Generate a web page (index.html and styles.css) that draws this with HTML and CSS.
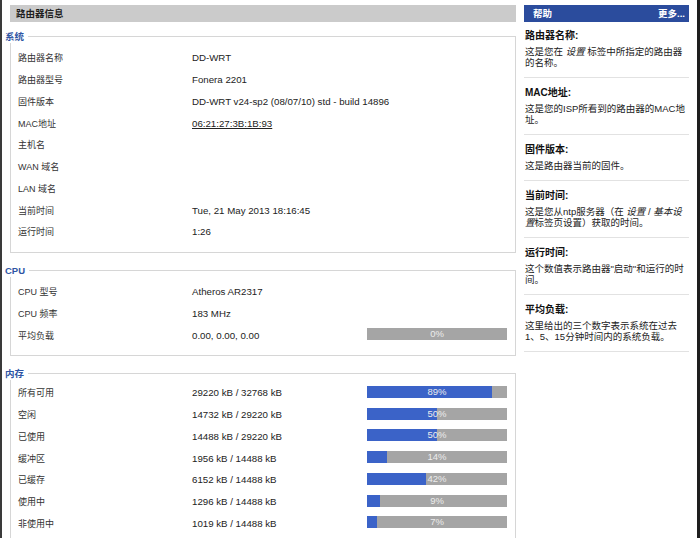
FILE: index.html
```html
<!DOCTYPE html>
<html lang="zh-CN">
<head>
<meta charset="utf-8">
<title>路由器信息</title>
<link rel="stylesheet" href="styles.css">
</head>
<body>
<div class="page">
  <div class="main">
    <div class="hdr">路由器信息</div>

    <div class="fs">
      <div class="legend">系统</div>
      <div class="row"><span class="lbl">路由器名称</span><span class="val">DD-WRT</span></div>
      <div class="row"><span class="lbl">路由器型号</span><span class="val">Fonera 2201</span></div>
      <div class="row"><span class="lbl">固件版本</span><span class="val wide">DD-WRT v24-sp2 (08/07/10) std - build 14896</span></div>
      <div class="row"><span class="lbl">MAC地址</span><span class="val"><u>06:21:27:3B:1B:93</u></span></div>
      <div class="row"><span class="lbl">主机名</span><span class="val"></span></div>
      <div class="row"><span class="lbl">WAN 域名</span><span class="val"></span></div>
      <div class="row"><span class="lbl">LAN 域名</span><span class="val"></span></div>
      <div class="row"><span class="lbl">当前时间</span><span class="val">Tue, 21 May 2013 18:16:45</span></div>
      <div class="row"><span class="lbl">运行时间</span><span class="val">1:26</span></div>
    </div>

    <div class="fs fs-gap">
      <div class="legend">CPU</div>
      <div class="row"><span class="lbl">CPU 型号</span><span class="val">Atheros AR2317</span></div>
      <div class="row"><span class="lbl">CPU 频率</span><span class="val">183 MHz</span></div>
      <div class="row"><span class="lbl">平均负载</span><span class="val">0.00, 0.00, 0.00</span>
        <span class="bar"><span class="fill" style="width:0%"></span><span class="pct">0%</span></span></div>
    </div>

    <div class="fs fs-gap fs-tight">
      <div class="legend">内存</div>
      <div class="row"><span class="lbl">所有可用</span><span class="val">29220 kB / 32768 kB</span>
        <span class="bar"><span class="fill" style="width:89%"></span><span class="pct">89%</span></span></div>
      <div class="row"><span class="lbl">空闲</span><span class="val">14732 kB / 29220 kB</span>
        <span class="bar"><span class="fill" style="width:50%"></span><span class="pct">50%</span></span></div>
      <div class="row"><span class="lbl">已使用</span><span class="val">14488 kB / 29220 kB</span>
        <span class="bar"><span class="fill" style="width:50%"></span><span class="pct">50%</span></span></div>
      <div class="row"><span class="lbl">缓冲区</span><span class="val">1956 kB / 14488 kB</span>
        <span class="bar"><span class="fill" style="width:14%"></span><span class="pct">14%</span></span></div>
      <div class="row"><span class="lbl">已缓存</span><span class="val">6152 kB / 14488 kB</span>
        <span class="bar"><span class="fill" style="width:42%"></span><span class="pct">42%</span></span></div>
      <div class="row"><span class="lbl">使用中</span><span class="val">1296 kB / 14488 kB</span>
        <span class="bar"><span class="fill" style="width:9%"></span><span class="pct">9%</span></span></div>
      <div class="row"><span class="lbl">非使用中</span><span class="val">1019 kB / 14488 kB</span>
        <span class="bar"><span class="fill" style="width:7%"></span><span class="pct">7%</span></span></div>
    </div>
  </div>

  <div class="side">
    <div class="side-hdr"><span>帮助</span><span>更多...</span></div>
    <div class="help first">
      <div class="ht">路由器名称:</div>
      <div class="hb">这是您在 <em>设置</em> 标签中所指定的路由器的名称。</div>
    </div>
    <div class="help">
      <div class="ht">MAC地址:</div>
      <div class="hb">这是您的ISP所看到的路由器的MAC地址。</div>
    </div>
    <div class="help">
      <div class="ht">固件版本:</div>
      <div class="hb">这是路由器当前的固件。</div>
    </div>
    <div class="help">
      <div class="ht">当前时间:</div>
      <div class="hb">这是您从ntp服务器（在 <em>设置</em> / <em>基本设置</em>标签页设置）获取的时间。</div>
    </div>
    <div class="help">
      <div class="ht">运行时间:</div>
      <div class="hb">这个数值表示路由器"启动"和运行的时间。</div>
    </div>
    <div class="help">
      <div class="ht">平均负载:</div>
      <div class="hb">这里给出的三个数字表示系统在过去1、5、15分钟时间内的系统负载。</div>
    </div>
  </div>
</div>
</body>
</html>
```

FILE: styles.css
```css
html, body {
  margin: 0;
  padding: 0;
  background: #fff;
}

body {
  font-family: "Liberation Sans", "Noto Sans CJK SC", sans-serif;
  font-size: 10px;
  color: #222;
}

.page {
  display: grid;
  grid-template-columns: 506px 165px;
  column-gap: 8px;
  align-items: start;
  height: 538px;
  box-sizing: border-box;
  padding: 5px 8px 0 8px;
  border-left: 2px solid #3a3a3a;
  border-right: 3px solid #1e1e1e;
  overflow: hidden;
}

/* ---------- main column ---------- */
.hdr {
  height: 17px;
  line-height: 17px;
  background: #cbcbcb;
  padding-left: 6px;
  font-size: 9.5px;
  font-weight: bold;
  color: #1e1e1e;
}

.fs {
  margin-top: 14px;
  border: 1px solid #d6d6d6;
  padding: 0 7px 9px 7px;
}

.fs-gap {
  margin-top: 17px;
}

.fs-tight .legend {
  margin-bottom: 2px;
}

.legend {
  width: fit-content;
  margin: -7px 0 4px -13px;
  padding-right: 4px;
  background: #fff;
  line-height: 13px;
  font-size: 9.5px;
  font-weight: bold;
  color: #2f55a4;
}

.row {
  display: flex;
  align-items: center;
  height: 21.75px;
}

.lbl {
  width: 174px;
  flex: none;
  font-size: 9px;
  color: #333;
}

.val {
  width: 175px;
  flex: none;
  font-size: 9.7px;
  color: #222;
  white-space: nowrap;
}

.val u {
  text-decoration-thickness: 1px;
  text-underline-offset: 1px;
}

.bar {
  display: grid;
  width: 140px;
  height: 12px;
  margin-top: -2px;
  background: #a5a5a5;
}

.fill,
.pct {
  grid-area: 1 / 1;
}

.fill {
  height: 12px;
  background: #3b63c8;
}

.pct {
  text-align: center;
  line-height: 12px;
  font-size: 9.5px;
  color: #ececec;
}

/* ---------- side column ---------- */
.side-hdr {
  display: flex;
  justify-content: space-between;
  height: 17px;
  line-height: 17px;
  padding: 0 4px 0 9px;
  background: #2b4c9d;
  color: #fff;
  font-size: 9.5px;
  font-weight: bold;
}

.help {
  padding: 8px 0 9px 1px;
  border-bottom: 1px solid #e2e2e2;
}

.help.first {
  padding-top: 7px;
}

.ht {
  line-height: 14px;
  margin-bottom: 3px;
  font-size: 10px;
  font-weight: bold;
  color: #111;
}

.hb {
  line-height: 11px;
  font-size: 9.5px;
  color: #222;
}

.hb em {
  font-style: italic;
}
```
